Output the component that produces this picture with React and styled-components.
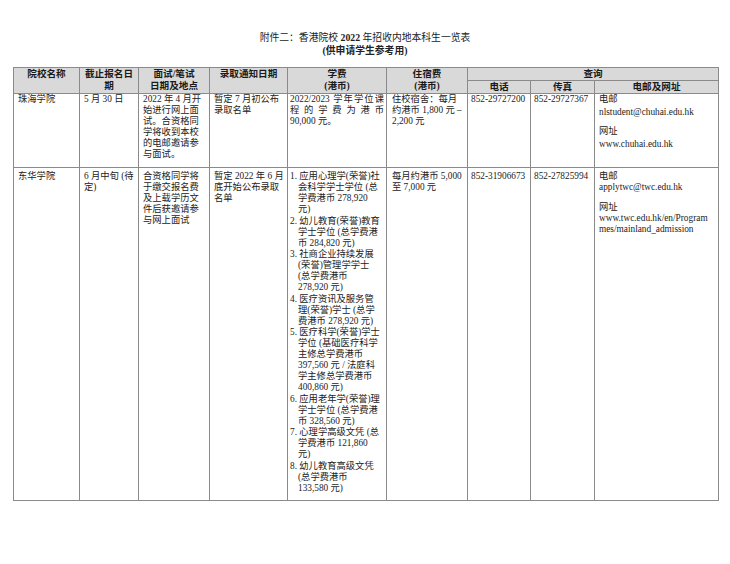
import React from "react";
import styled, { createGlobalStyle } from "styled-components";

const GlobalStyle = createGlobalStyle`
  html, body { margin: 0; padding: 0; background: #fff; }
  body {
    font-family: "Liberation Serif", "Noto Sans CJK SC", serif;
    color: #222;
  }
`;

const Page = styled.div`
  width: 730px;
  height: 564px;
  padding-top: 31px;
  box-sizing: border-box;
  overflow: hidden;
`;

const Title = styled.div`
  text-align: center;
  font-size: 9.8px;
  line-height: 13px;
  b { font-weight: 700; }
`;

const Table = styled.table`
  margin: 10px 0 0 13px;
  width: 705px;
  border-collapse: collapse;
  table-layout: fixed;
  font-size: 9.3px;
  line-height: 11px;
`;

const Row = styled.tr`
  height: ${(p) => p.$h}px;
`;

const HeadCell = styled.th`
  background: #d9d9d9;
  border: 1px solid #8a8a8a;
  font-weight: 700;
  font-size: 9.6px;
  padding: 0 2px;
  vertical-align: top;
  line-height: 12px;
  text-align: center;
  color: #1a1a1a;
`;

const Cell = styled.td`
  border: 1px solid #8a8a8a;
  vertical-align: top;
  padding: ${(p) => p.$top ?? 2}px ${(p) => p.$side ?? 4}px 0;
  text-align: left;
  white-space: nowrap;
  overflow: visible;
`;

const JLine = styled.span`
  display: block;
  white-space: normal;
  text-align: justify;
  text-align-last: justify;
`;

const Para = styled.div`
  margin-bottom: ${(p) => p.$gap ?? 0}px;
`;

const FeeList = styled.ol`
  list-style: none;
  margin: 0;
  padding: 0;
  line-height: 11px;
`;

const FeeItem = styled.li`
  padding-left: 8px;
  text-indent: -8px;
  margin-bottom: 0.5px;
`;

const fees = [
  ["1. 应用心理学(荣誉)社", "会科学学士学位 (总", "学费港币 278,920", "元)"],
  ["2. 幼儿教育(荣誉)教育", "学士学位 (总学费港", "币 284,820 元)"],
  ["3. 社商企业持续发展", "(荣誉)管理学学士", "(总学费港币", "278,920 元)"],
  ["4. 医疗资讯及服务管", "理(荣誉)学士 (总学", "费港币 278,920 元)"],
  [
    "5. 医疗科学(荣誉)学士",
    "学位 (基础医疗科学",
    "主修总学费港币",
    "397,560 元 / 法庭科",
    "学主修总学费港币",
    "400,860 元)",
  ],
  ["6. 应用老年学(荣誉)理", "学士学位 (总学费港", "币 328,560 元)"],
  ["7. 心理学高级文凭 (总", "学费港币 121,860", "元)"],
  ["8. 幼儿教育高级文凭", "(总学费港币", "133,580 元)"],
];

function Lines({ items }) {
  return items.map((t, i) => (
    <React.Fragment key={i}>
      {t}
      {i < items.length - 1 && <br />}
    </React.Fragment>
  ));
}

const widths = [66, 59, 71, 78, 99, 81, 63, 64, 124];

export default function App() {
  return (
    <Page>
      <GlobalStyle />
      <Title>
        附件二：香港院校 <b>2022</b> 年招收内地本科生一览表
        <br />
        <b>(供申请学生参考用)</b>
      </Title>
      <Table>
        <colgroup>
          {widths.map((w, i) => (
            <col key={i} style={{ width: w }} />
          ))}
        </colgroup>
        <thead>
          <Row $h={11}>
            <HeadCell rowSpan={2}>院校名称</HeadCell>
            <HeadCell rowSpan={2}>
              截止报名日
              <br />期
            </HeadCell>
            <HeadCell rowSpan={2}>
              面试/笔试
              <br />
              日期及地点
            </HeadCell>
            <HeadCell rowSpan={2}>录取通知日期</HeadCell>
            <HeadCell rowSpan={2}>
              学费
              <br />
              (港币)
            </HeadCell>
            <HeadCell rowSpan={2}>
              住宿费
              <br />
              (港币)
            </HeadCell>
            <HeadCell colSpan={3}>查询</HeadCell>
          </Row>
          <Row $h={13}>
            <HeadCell>电话</HeadCell>
            <HeadCell>传真</HeadCell>
            <HeadCell>电邮及网址</HeadCell>
          </Row>
        </thead>
        <tbody>
          <Row $h={74}>
            <Cell $top={0}>珠海学院</Cell>
            <Cell $top={0}>5 月 30 日</Cell>
            <Cell $top={0}>
              <Lines
                items={[
                  "2022 年 4 月开",
                  "始进行网上面",
                  "试。合资格同",
                  "学将收到本校",
                  "的电邮邀请参",
                  "与面试。",
                ]}
              />
            </Cell>
            <Cell $top={0}>
              <Lines items={["暂定 7 月初公布", "录取名单"]} />
            </Cell>
            <Cell $top={0} $side={2}>
              <JLine>2022/2023 学年学位课</JLine>
              <JLine>程的学费为港币</JLine>
              90,000 元。
            </Cell>
            <Cell $top={0} $side={5}>
              <Lines items={["住校宿舍：每月", "约港币 1,800 元 –", "2,200 元"]} />
            </Cell>
            <Cell $top={0} $side={3}>852-29727200</Cell>
            <Cell $top={0} $side={3}>852-29727367</Cell>
            <Cell $top={0}>
              <Para $gap={2}>电邮</Para>
              <Para $gap={8}>nlstudent@chuhai.edu.hk</Para>
              <Para $gap={2}>网址</Para>
              <Para>www.chuhai.edu.hk</Para>
            </Cell>
          </Row>
          <Row $h={333}>
            <Cell $top={3}>东华学院</Cell>
            <Cell $top={3}>
              <Lines items={["6 月中旬 (待", "定)"]} />
            </Cell>
            <Cell $top={3}>
              <Lines
                items={[
                  "合资格同学将",
                  "于缴交报名费",
                  "及上载学历文",
                  "件后获邀请参",
                  "与网上面试",
                ]}
              />
            </Cell>
            <Cell $top={3}>
              <Lines items={["暂定 2022 年 6 月", "底开始公布录取", "名单"]} />
            </Cell>
            <Cell $top={3} $side={2}>
              <FeeList>
                {fees.map((f, i) => (
                  <FeeItem key={i}>
                    <Lines items={f} />
                  </FeeItem>
                ))}
              </FeeList>
            </Cell>
            <Cell $top={3} $side={5}>
              <Lines items={["每月约港币 5,000", "至 7,000 元"]} />
            </Cell>
            <Cell $top={3} $side={3}>852-31906673</Cell>
            <Cell $top={3} $side={3}>852-27825994</Cell>
            <Cell $top={3}>
              <Para>电邮</Para>
              <Para $gap={9}>applytwc@twc.edu.hk</Para>
              <Para>网址</Para>
              <Para>
                www.twc.edu.hk/en/Program
                <br />
                mes/mainland_admission
              </Para>
            </Cell>
          </Row>
        </tbody>
      </Table>
    </Page>
  );
}
